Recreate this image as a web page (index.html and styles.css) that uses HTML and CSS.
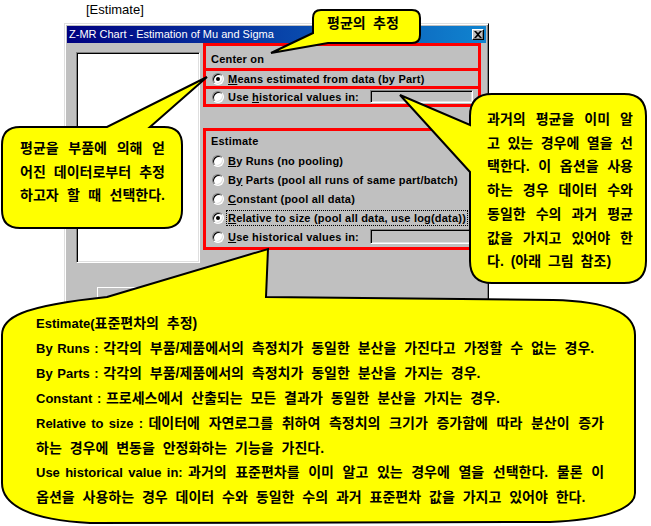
FILE: index.html
```html
<!DOCTYPE html>
<html lang="ko">
<head>
<meta charset="utf-8">
<title>Estimate</title>
<link rel="stylesheet" href="styles.css">
</head>
<body>
<div class="page">
  <div class="caption">[Estimate]</div>

  <div class="dialog">
    <div class="titlebar">
      <span class="title">Z-MR Chart - Estimation of Mu and Sigma</span>
      <span class="close"><svg width="8" height="7" viewBox="0 0 8 7"><path d="M0 0h2l2 2 2-2h2L5 3.5 8 7H6L4 5 2 7H0l3-3.5z" fill="#000"/></svg></span>
    </div>
    <div class="dlg-body">
      <div class="listbox"></div>
      <div class="groups">
        <div class="redbox center-box">
          <div class="head">Center on</div>
          <div class="row split"><span class="radio on"></span><span class="lbl"><u>M</u>eans estimated from data (by Part)</span></div>
          <div class="row split"><span class="radio"></span><span class="lbl">Use <u>h</u>istorical values in:</span><span class="field"></span></div>
        </div>
        <div class="redbox est-box">
          <div class="head">Estimate</div>
          <div class="row"><span class="radio"></span><span class="lbl"><u>B</u>y Runs (no pooling)</span></div>
          <div class="row"><span class="radio"></span><span class="lbl">B<u>y</u> Parts (pool all runs of same part/batch)</span></div>
          <div class="row"><span class="radio"></span><span class="lbl"><u>C</u>onstant (pool all data)</span></div>
          <div class="row"><span class="radio on"></span><span class="lbl focus"><u>R</u>elative to size (pool all data, use log(data))</span></div>
          <div class="row"><span class="radio"></span><span class="lbl"><u>U</u>se historical values in:</span><span class="field tall"></span></div>
        </div>
      </div>
    </div>
    <div class="btn-row"><div class="btn"></div></div>
  </div>

  <svg class="callouts" width="651" height="526" viewBox="0 0 651 526">
    <path d="M321 10H412Q420 10 420 18V35Q420 43 412 43H328L271 53L313 33V18Q313 10 321 10Z"/>
    <path d="M20 127H107L207 77L150 127H164Q182 127 182 145V210Q182 228 164 228H20Q2 228 2 210V145Q2 127 20 127Z"/>
    <path d="M492 94H624Q646 94 646 116V261Q646 283 624 283H492Q470 283 470 261V172L400 95L470 125V116Q470 94 492 94Z"/>
    <path d="M107 297L268 249L266 297L553 300C600 301 635 310 635 335V493C635 510 600 520 550 522L90 523C30 520 2 505 2 483V335C2 318 20 306 107 297Z"/>
  </svg>

  <div class="note note-top">평균의 추정</div>

  <div class="note note-left">
    <div class="just">평균을 부품에 의해 얻</div>
    <div class="just">어진 데이터로부터 추정</div>
    <div class="just">하고자 할 때 선택한다.</div>
  </div>

  <div class="note note-right">
    <div class="just">과거의 평균을 이미 알</div>
    <div class="just">고 있는 경우에 열을 선</div>
    <div class="just">택한다. 이 옵션을 사용</div>
    <div class="just">하는 경우 데이터 수와</div>
    <div class="just">동일한 수의 과거 평균</div>
    <div class="just">값을 가지고 있어야 한</div>
    <div>다. (아래 그림 참조)</div>
  </div>

  <div class="note note-bottom">
    <div><b class="term">Estimate(</b>표준편차의 추정)</div>
    <div><b class="term">By Runs : </b>각각의 부품/제품에서의 측정치가 동일한 분산을 가진다고 가정할 수 없는 경우.</div>
    <div><b class="term">By Parts : </b>각각의 부품/제품에서의 측정치가 동일한 분산을 가지는 경우.</div>
    <div><b class="term">Constant : </b>프로세스에서 산출되는 모든 결과가 동일한 분산을 가지는 경우.</div>
    <div class="just"><b class="term">Relative to size : </b>데이터에 자연로그를 취하여 측정치의 크기가 증가함에 따라 분산이 증가</div>
    <div>하는 경우에 변동을 안정화하는 기능을 가진다.</div>
    <div class="just"><b class="term">Use historical value in: </b>과거의 표준편차를 이미 알고 있는 경우에 열을 선택한다. 물론 이</div>
    <div>옵션을 사용하는 경우 데이터 수와 동일한 수의 과거 표준편차 값을 가지고 있어야 한다.</div>
  </div>
</div>
</body>
</html>
```

FILE: styles.css
```css
html, body {
  margin: 0;
  padding: 0;
  background: #fff;
}

.page {
  position: relative;
  width: 651px;
  height: 526px;
  overflow: hidden;
  font-family: "Liberation Sans", Arial, sans-serif;
  color: #000;
}

.caption {
  height: 23px;
  padding-left: 86px;
  font-size: 13px;
  line-height: 20px;
}

/* ---------- dialog ---------- */
.dialog {
  margin-left: 64px;
  width: 425px;
  height: 310px;
  box-sizing: border-box;
  background: #c0c0c0;
  border: 1px solid;
  border-color: #dfdfdf #000 #000 #dfdfdf;
  box-shadow: inset 1px 1px #fff, inset -1px -1px #808080;
  padding: 2px;
}

.titlebar {
  height: 17px;
  display: flex;
  align-items: center;
  justify-content: space-between;
  padding: 0 2px 0 2px;
  background: linear-gradient(90deg, #000080, #1084d0);
}

.title {
  color: #fff;
  font-size: 11px;
  line-height: 17px;
  white-space: nowrap;
}

.close {
  width: 12px;
  height: 11px;
  box-sizing: border-box;
  display: flex;
  align-items: center;
  justify-content: center;
  background: #c0c0c0;
  border: 1px solid;
  border-color: #fff #000 #000 #fff;
  box-shadow: inset -1px -1px #808080;
}

.dlg-body {
  display: flex;
  align-items: flex-start;
  padding-left: 9px;
}

.listbox {
  width: 124px;
  height: 211px;
  margin-top: 9px;
  box-sizing: border-box;
  background: #fff;
  border: 1px solid;
  border-color: #808080 #fff #fff #808080;
  box-shadow: inset 1px 1px #000, inset -1px -1px #dfdfdf;
  flex: none;
}

.groups {
  margin-left: 3px;
  width: 278px;
  flex: none;
}

.redbox {
  border: 3px solid #f00;
  font-size: 11px;
  font-weight: bold;
  letter-spacing: 0.2px;
}

.center-box .head {
  height: 22px;
  box-sizing: border-box;
  padding: 5px 0 0 5px;
  line-height: 16px;
}

.center-box .row {
  height: 18px;
  box-sizing: border-box;
  border-top: 3px solid #f00;
}

.est-box {
  margin-top: 21px;
  height: 122px;
  box-sizing: border-box;
}

.est-box .head {
  height: 20px;
  line-height: 20px;
  padding-left: 5px;
}

.est-box .row {
  height: 19px;
}

.row {
  display: flex;
  align-items: center;
  padding-left: 6px;
  white-space: nowrap;
}

.lbl {
  margin-left: 4px;
  line-height: 14px;
}

.focus {
  outline: 1px dotted #000;
  outline-offset: 0;
  padding: 0 1px;
  margin-left: 3px;
}

.radio {
  position: relative;
  width: 12px;
  height: 12px;
  flex: none;
  box-sizing: border-box;
  border-radius: 50%;
  background: #fff;
  border: 1px solid;
  border-color: #808080 #fff #fff #808080;
  box-shadow: inset 1px 1px #000, inset -1px -1px #dfdfdf;
}

.radio.on::after {
  content: "";
  position: absolute;
  left: 3px;
  top: 3px;
  width: 4px;
  height: 4px;
  border-radius: 50%;
  background: #000;
}

.field {
  width: 103px;
  height: 13px;
  margin-left: auto;
  margin-right: 5px;
  box-sizing: border-box;
  background: #c0c0c0;
  border: 1px solid;
  border-color: #808080 #fff #fff #808080;
  box-shadow: inset 1px 1px #000, inset -1px -1px #dfdfdf;
  flex: none;
}

.field.tall {
  height: 15px;
}

.btn-row {
  padding: 24px 0 0 30px;
}

.btn {
  width: 75px;
  height: 23px;
  box-sizing: border-box;
  border: 1px solid;
  border-color: #fff #000 #000 #fff;
  box-shadow: inset -1px -1px #808080;
}

/* ---------- callouts ---------- */
.callouts {
  position: absolute;
  left: 0;
  top: 0;
}

.callouts path {
  fill: #ffff00;
  stroke: #000;
  stroke-width: 2;
  stroke-linejoin: miter;
}

.note {
  position: absolute;
  font-family: "Liberation Sans", "Noto Sans CJK KR", sans-serif;
  font-weight: bold;
  font-size: 14px;
  white-space: nowrap;
}

.note-top {
  left: 327px;
  top: 14px;
  line-height: 18px;
  word-spacing: 3.5px;
}

.note-left {
  left: 20px;
  top: 137px;
  width: 145px;
  line-height: 23.5px;
}

.note-right {
  left: 487px;
  top: 108px;
  width: 146px;
  line-height: 23.7px;
  word-spacing: 3px;
}

.note-bottom {
  left: 36px;
  top: 311px;
  width: 568px;
  line-height: 24px;
  word-spacing: 4px;
}

.term {
  font-size: 13px;
  word-spacing: 1px;
}

.just {
  text-align: justify;
  text-align-last: justify;
}
```
